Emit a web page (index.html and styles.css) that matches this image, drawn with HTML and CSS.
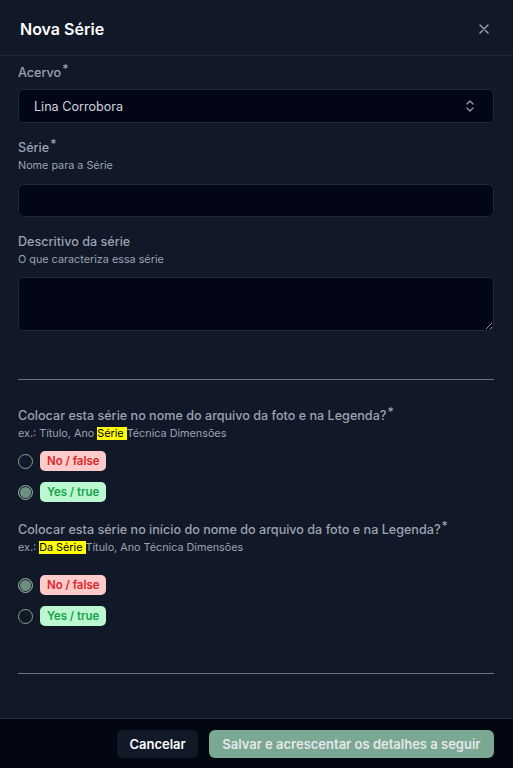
FILE: index.html
```html
<!DOCTYPE html>
<html lang="pt">
<head>
<meta charset="utf-8">
<title>Nova Série</title>
<link rel="stylesheet" href="styles.css">
</head>
<body>
<div class="modal">
  <header class="modal-header">
    <h1 class="modal-title">Nova Série</h1>
    <button class="close-btn" aria-label="Fechar">
      <svg width="10" height="10" viewBox="0 0 10 10"><path d="M1 1L9 9M9 1L1 9" stroke="#9ca3af" stroke-width="1.4" stroke-linecap="round"/></svg>
    </button>
  </header>
  <main class="modal-body">
    <div class="field">
      <label class="label">Acervo<sup class="req">*</sup></label>
      <div class="select">
        <span class="select-value">Lina Corrobora</span>
        <svg class="chevrons" width="10" height="14" viewBox="0 0 10 14"><path d="M2 5L5 2L8 5M2 9L5 12L8 9" fill="none" stroke="#9ca3af" stroke-width="1.2" stroke-linecap="round" stroke-linejoin="round"/></svg>
      </div>
    </div>
    <div class="field field-gap">
      <label class="label">Série<sup class="req">*</sup></label>
      <div class="hint">Nome para a Série</div>
      <input class="input" type="text">
    </div>
    <div class="field field-gap">
      <label class="label">Descritivo da série</label>
      <div class="hint">O que caracteriza essa série</div>
      <textarea class="textarea"></textarea>
    </div>
    <hr class="divider divider-1">
    <div class="question">
      <div class="label">Colocar esta série no nome do arquivo da foto e na Legenda?<sup class="req">*</sup></div>
      <div class="hint">ex.: Título, Ano <mark class="hl">Série </mark>Técnica Dimensões</div>
      <div class="options">
        <div class="option"><span class="radio"></span><span class="badge badge-no">No / false</span></div>
        <div class="option"><span class="radio checked"></span><span class="badge badge-yes">Yes / true</span></div>
      </div>
    </div>
    <div class="question q2">
      <div class="label">Colocar esta série no início do nome do arquivo da foto e na Legenda?<sup class="req">*</sup></div>
      <div class="hint">ex.: <mark class="hl">Da Série </mark>Título, Ano Técnica Dimensões</div>
      <div class="options options-2">
        <div class="option"><span class="radio checked"></span><span class="badge badge-no">No / false</span></div>
        <div class="option"><span class="radio"></span><span class="badge badge-yes">Yes / true</span></div>
      </div>
    </div>
    <hr class="divider divider-2">
  </main>
  <footer class="modal-footer">
    <button class="btn btn-cancel">Cancelar</button>
    <button class="btn btn-save">Salvar e acrescentar os detalhes a seguir</button>
  </footer>
</div>
</body>
</html>
```
FILE: styles.css
```css
* { box-sizing: border-box; }
html, body { margin: 0; padding: 0; }
body {
  background: #111827;
  font-family: Inter, "Noto Sans", sans-serif;
  color: #e5e7eb;
  width: 513px;
  height: 768px;
  overflow: hidden;
}
.modal {
  display: flex;
  flex-direction: column;
  height: 768px;
}
.modal-header {
  height: 56px;
  border-bottom: 1px solid #1f2937;
  display: flex;
  align-items: center;
  justify-content: space-between;
  padding: 3px 23px 0 20px;
}
.modal-title {
  margin: 0;
  font-size: 16px;
  font-weight: 600;
  color: #ffffff;
  line-height: 24px;
}
.close-btn {
  background: none;
  border: 0;
  padding: 0;
  width: 12px;
  height: 12px;
  display: flex;
  align-items: center;
  justify-content: center;
}
.modal-body {
  flex: 1;
  padding: 7px 19px 0 18px;
}
.field { display: flex; flex-direction: column; }
.field-gap { margin-top: 15px; }
.label {
  font-size: 12.6px;
  font-weight: 500;
  line-height: 20px;
  color: #9ca3af;
}
.req {
  font-size: 12px;
  line-height: 0;
  vertical-align: 4px;
  margin-left: 1px;
  color: #9ca3af;
}
.hint {
  font-size: 10.8px;
  line-height: 16px;
  color: #9ca3af;
}
.select {
  margin-top: 6px;
  height: 34px;
  background: #020617;
  border: 1px solid #1f2937;
  border-radius: 6px;
  display: flex;
  align-items: center;
  justify-content: space-between;
  padding: 0 18px 0 15px;
}
.select-value {
  font-size: 12.6px;
  color: #d1d5db;
}
.input {
  margin-top: 10px;
  height: 33px;
  background: #020617;
  border: 1px solid #1f2937;
  border-radius: 6px;
  outline: none;
  color: #e5e7eb;
}
.textarea {
  margin-top: 9px;
  height: 54px;
  background: #020617;
  border: 1px solid #1f2937;
  border-radius: 6px;
  outline: none;
  color-scheme: dark;
  resize: vertical;
  display: block;
  width: 100%;
}
.divider {
  border: 0;
  border-top: 1px solid #6b7280;
  margin: 0;
}
.divider-1 { margin-top: 48px; }
.divider-2 { margin-top: 47px; }
.question { margin-top: 26px; }
.q2 { margin-top: 18px; }
.options {
  margin-top: 9px;
  display: flex;
  flex-direction: column;
  gap: 11px;
}
.options-2 { margin-top: 19px; }
.option {
  display: flex;
  align-items: center;
  gap: 7px;
}
.radio {
  width: 15px;
  height: 15px;
  border-radius: 50%;
  border: 1px solid #7aa892;
  display: inline-block;
}
.radio.checked {
  background: #6f8f80;
  box-shadow: inset 0 0 0 1px #111827;
  border-color: #8aa89a;
}
.badge {
  height: 20px;
  line-height: 20px;
  padding: 0 7px;
  border-radius: 5px;
  font-size: 11.4px;
  font-weight: 600;
}
.badge-no { background: #fecaca; color: #dc2626; }
.badge-yes { background: #bbf7d0; color: #16a34a; }
.hl {
  background: #ffff00;
  color: #000000;
  padding: 0;
}
.modal-footer {
  height: 50px;
  border-top: 1px solid #1f2937;
  background: #030712;
  display: flex;
  justify-content: flex-end;
  align-items: flex-start;
  gap: 11px;
  padding: 11px 19px 0 0;
}
.btn {
  height: 28px;
  border: 0;
  border-radius: 6px;
  font-family: Inter, "Noto Sans", sans-serif;
  font-size: 13px;
  font-weight: 600;
  padding: 0 12px;
}
.btn-cancel {
  background: #111827;
  color: #ffffff;
}
.btn-save {
  background: #7aa892;
  color: #e5e7eb;
  padding: 0 13.5px;
}
```
